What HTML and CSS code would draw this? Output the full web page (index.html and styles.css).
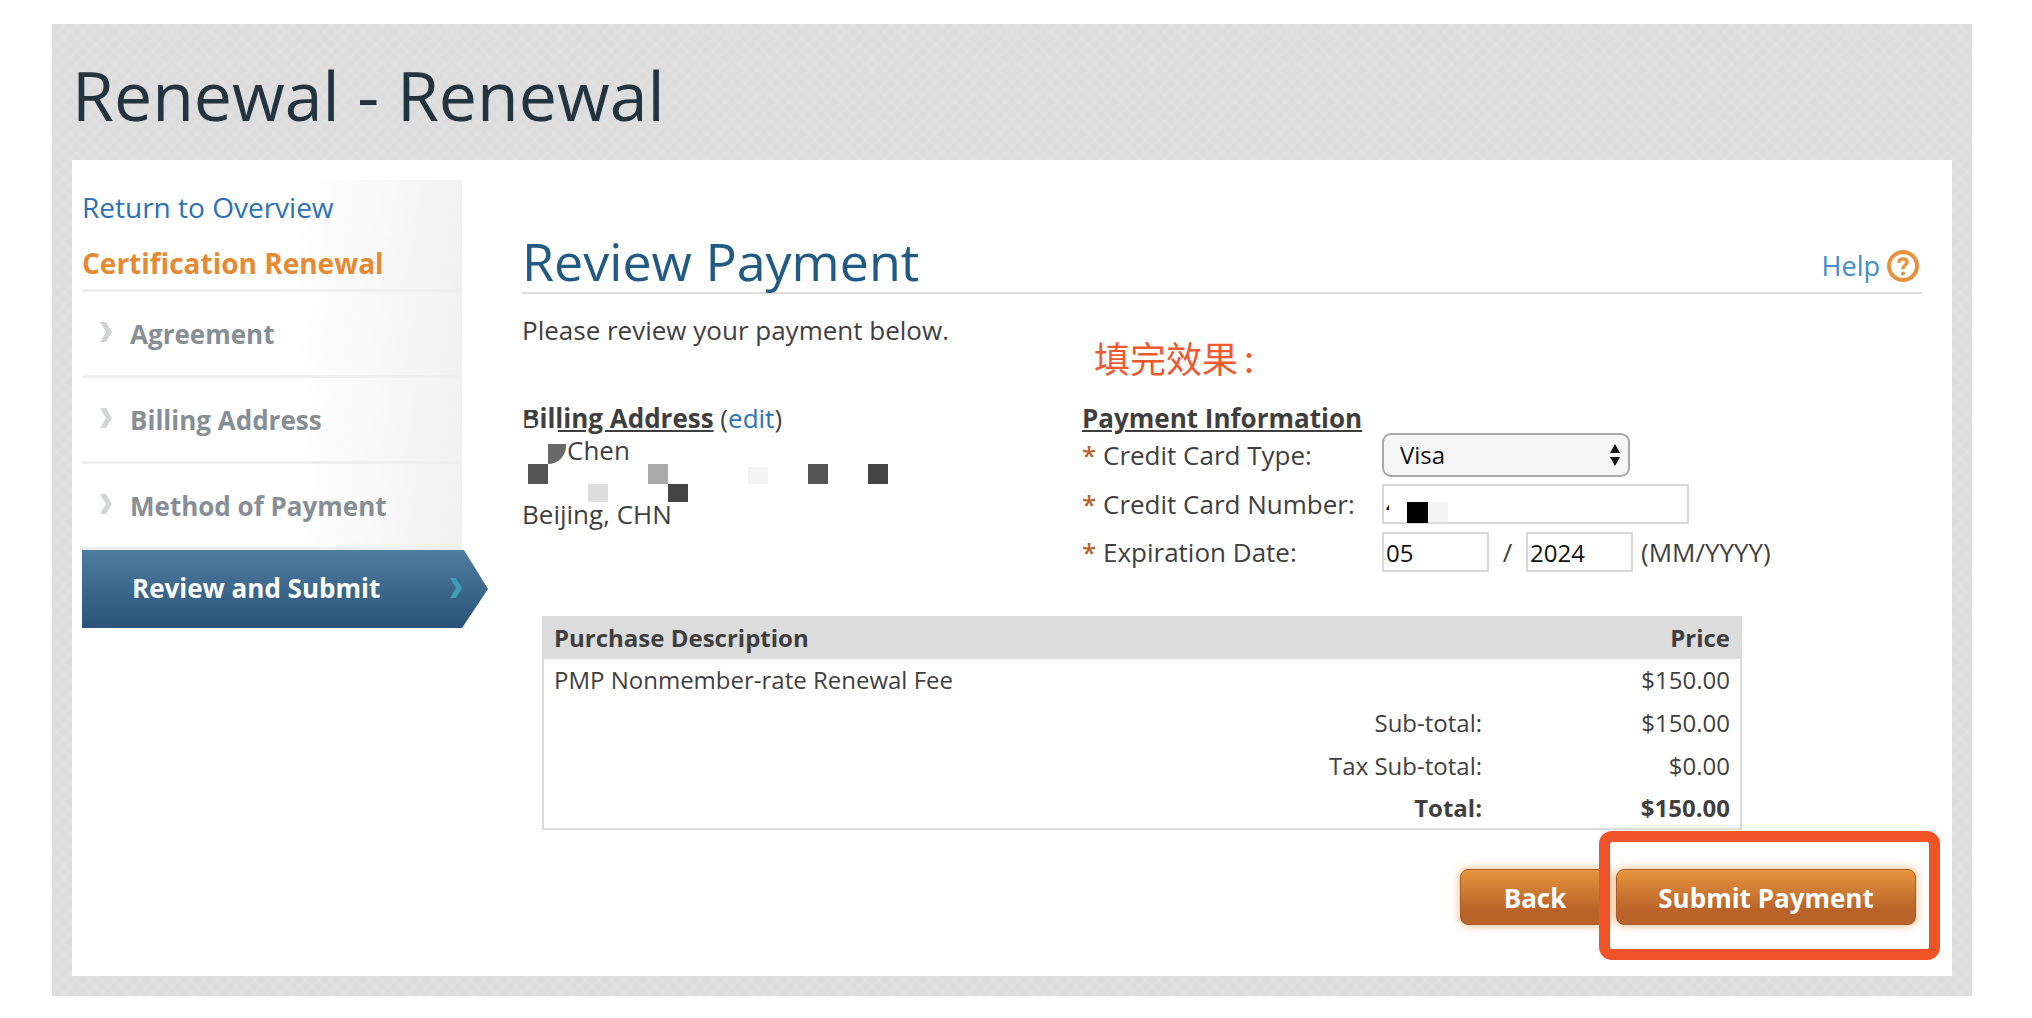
FILE: index.html
```html
<!DOCTYPE html>
<html lang="en">

<head>
    <meta charset="UTF-8">
    <title>Renewal - Renewal</title>
    <link rel="stylesheet" href="styles.css">
</head>

<body>
    <div class="page">
        <h1 class="page-title">Renewal - Renewal</h1>
        <div class="panel">
            <div class="sidebar">
                <div class="side-top">
                    <a class="overview-link" href="#">Return to Overview</a>
                    <div class="side-title">Certification Renewal</div>
                </div>
                <div class="step"><span class="step-arrow">
                    <svg width="12" height="20" viewBox="0 0 12 20"><path d="M0 0h6l6 10-6 10H0l6-10z" fill="#d2d4d6"/></svg>
                </span>Agreement</div>
                <div class="step"><span class="step-arrow">
                    <svg width="12" height="20" viewBox="0 0 12 20"><path d="M0 0h6l6 10-6 10H0l6-10z" fill="#d2d4d6"/></svg>
                </span>Billing Address</div>
                <div class="step"><span class="step-arrow">
                    <svg width="12" height="20" viewBox="0 0 12 20"><path d="M0 0h6l6 10-6 10H0l6-10z" fill="#d2d4d6"/></svg>
                </span>Method of Payment</div>
                <div class="step-active">
                    <span>Review and Submit</span>
                    <svg class="active-arrow" width="12" height="20" viewBox="0 0 12 20"><path d="M0 0h6l6 10-6 10H0l6-10z" fill="#3f9db5"/></svg>
                </div>
            </div>

            <div class="content">
                <div class="content-head">
                    <h2 class="content-title">Review Payment</h2>
                    <a class="help" href="#">Help
                        <svg width="32" height="32" viewBox="0 0 32 32"><circle cx="16" cy="16" r="14" fill="#fff" stroke="#e8903c" stroke-width="4"/><path d="M10.500 12.500c0-3.200 2.500-5 5.500-5s5.500 1.700 5.500 4.500c0 3.800-4 3.700-4 7h-3c0-4.300 4-4.500 4-6.800 0-1.200-1.100-2-2.500-2s-2.500.9-2.600 2.300z" fill="#e8903c" stroke="#e8903c" stroke-width=".6"/><circle cx="16" cy="23.500" r="2" fill="#e8903c"/></svg>
                    </a>
                </div>
                <p class="intro">Please review your payment below.</p>

                <div class="details">
                    <div class="billing">
                        <div class="sub-head"><b>Billing Address</b> (<a href="#">edit</a>)</div>
                        <div class="name-line">Chen</div>
                        <div class="street-line"></div>
                        <div>Beijing, CHN</div>
                        <i class="mask m-t"></i>
                        <i class="mask m-b"></i>
                        <i class="mask m-u"></i>
                        <i class="mask m1"></i>
                        <i class="mask m2"></i>
                        <i class="mask m3"></i>
                        <i class="mask m4"></i>
                        <i class="mask m5"></i>
                        <i class="mask m6"></i>
                        <i class="mask m7"></i>
                        <i class="mask m8"></i>
                    </div>
                    <div class="payment">
                        <div class="sub-head"><b>Payment Information</b></div>
                        <div class="field field-type">
                            <label><span class="req">*</span> Credit Card Type:</label>
                            <div class="select-wrap">
                                <select class="card-select"><option>Visa</option></select>
                                <svg class="select-arrows" width="12" height="24" viewBox="0 0 12 24"><path d="M6 1l5 9H1zM1 14h10l-5 9z" fill="#111"/></svg>
                            </div>
                        </div>
                        <div class="field">
                            <label><span class="req">*</span> Credit Card Number:</label>
                            <div class="number-wrap">
                                <input class="text-input number-input" type="text" value="4">
                                <i class="mask n0"></i>
                                <i class="mask n1"></i>
                                <i class="mask n2"></i>
                            </div>
                        </div>
                        <div class="field">
                            <label><span class="req">*</span> Expiration Date:</label>
                            <input class="text-input date-input" type="text" value="05">
                            <span class="slash">/</span>
                            <input class="text-input date-input" type="text" value="2024">
                            <span class="format">(MM/YYYY)</span>
                        </div>
                    </div>
                </div>

                <table class="purchase">
                    <tr class="head-row">
                        <th class="desc" colspan="2">Purchase Description</th>
                        <th class="price">Price</th>
                    </tr>
                    <tr>
                        <td class="desc">PMP Nonmember-rate Renewal Fee</td>
                        <td class="label"></td>
                        <td class="price">$150.00</td>
                    </tr>
                    <tr>
                        <td class="desc"></td>
                        <td class="label">Sub-total:</td>
                        <td class="price">$150.00</td>
                    </tr>
                    <tr>
                        <td class="desc"></td>
                        <td class="label">Tax Sub-total:</td>
                        <td class="price">$0.00</td>
                    </tr>
                    <tr class="total-row">
                        <td class="desc"></td>
                        <td class="label">Total:</td>
                        <td class="price">$150.00</td>
                    </tr>
                </table>

                <div class="actions">
                    <a class="btn btn-back" href="#">Back</a>
                    <a class="btn btn-submit" href="#">Submit Payment</a>
                </div>
            </div>
        </div>
        <div class="note">填完效果<span class="note-colon">:</span></div>
        <div class="red-box"></div>
    </div>
</body>

</html>
```

FILE: styles.css
```css
* {
    box-sizing: border-box;
}

body {
    margin: 0;
    background: #fff;
    font-family: "Open Sans", "Noto Sans", sans-serif;
    color: #3f3f3f;
}

a {
    text-decoration: none;
}

.page {
    position: relative;
    width: 1920px;
    height: 972px;
    margin: 24px 0 0 52px;
    padding: 0 20px;
    background-color: #dcdcdc;
    background-image:
        repeating-linear-gradient(45deg, rgba(255, 255, 255, .07) 0 3px, transparent 3px 9px),
        repeating-linear-gradient(-45deg, rgba(255, 255, 255, .07) 0 3px, transparent 3px 9px);
}

.page-title {
    height: 136px;
    margin: 0;
    padding: 26px 0 0 0;
    font-size: 68px;
    line-height: 90px;
    font-weight: 400;
    color: #24343f;
}

.panel {
    display: flex;
    height: 816px;
    padding: 20px 30px 0 10px;
    background: #fff;
}

.sidebar {
    flex: none;
    width: 380px;
    margin-right: 60px;
}

.side-top {
    height: 112px;
    padding-top: 8px;
    border-bottom: 3px solid #efefef;
    background: linear-gradient(100deg, #fff 55%, #f1f1f1);
}

.overview-link {
    display: block;
    font-size: 28px;
    line-height: 38px;
    color: #2a72b5;
}

.side-title {
    margin-top: 18px;
    font-size: 28px;
    line-height: 38px;
    font-weight: 700;
    color: #e58a33;
}

.step {
    display: flex;
    align-items: center;
    height: 86px;
    border-bottom: 3px solid #efefef;
    background: linear-gradient(100deg, #fff 55%, #f1f1f1);
    font-size: 26px;
    font-weight: 700;
    color: #868e96;
}

.step-arrow {
    display: flex;
    width: 48px;
    padding: 0 0 4px 18px;
}

.step-active {
    position: relative;
    display: flex;
    align-items: center;
    justify-content: space-between;
    width: 380px;
    height: 78px;
    padding: 0 0 2px 50px;
    background: linear-gradient(#4d7da0, #2a5377);
    font-size: 26px;
    font-weight: 700;
    color: #fff;
}

.step-active::after {
    content: "";
    position: absolute;
    left: 380px;
    top: 0;
    width: 26px;
    height: 78px;
    background: linear-gradient(#4d7da0, #2a5377);
    clip-path: polygon(0 0, 2px 0, 100% 50%, 0 100%);
}

.content {
    flex: 1;
}

.content-head {
    display: flex;
    align-items: flex-end;
    justify-content: space-between;
    height: 114px;
    border-bottom: 2px solid #dcdcdc;
}

.content-title {
    margin: 0;
    font-size: 52px;
    line-height: 62px;
    font-weight: 400;
    color: #215a85;
}

.help {
    display: flex;
    align-items: center;
    gap: 7px;
    margin: 0 3px 8px 0;
    font-size: 27px;
    color: #3f8ecb;
}

.intro {
    margin: 18px 0 0;
    font-size: 26px;
    line-height: 36px;
}

.details {
    display: flex;
    margin-top: 54px;
    font-size: 26px;
    line-height: 32px;
}

.billing {
    position: relative;
    width: 560px;
}

.sub-head {
    height: 32px;
}

.sub-head a {
    color: #2a72b5;
}

.sub-head b {
    text-decoration: underline;
}

.name-line {
    padding-left: 45px;
}

.street-line {
    height: 32px;
}

.mask {
    position: absolute;
    display: block;
}

.m-t {
    left: 0;
    top: 0;
    width: 15px;
    height: 8px;
    background: #fff;
}

.m-b {
    left: 4px;
    top: 18px;
    width: 9px;
    height: 6px;
    background: #fff;
}

.m-u {
    left: 0;
    top: 26px;
    width: 36px;
    height: 6px;
    background: #fff;
}

.m1 {
    left: 6px;
    top: 62px;
    width: 20px;
    height: 20px;
    background: #555;
}

.m2 {
    left: 26px;
    top: 42px;
    width: 18px;
    height: 20px;
    border-radius: 0 0 20px 0;
    background: #696969;
}

.m3 {
    left: 126px;
    top: 62px;
    width: 20px;
    height: 20px;
    background: #aaa;
}

.m4 {
    left: 146px;
    top: 82px;
    width: 20px;
    height: 18px;
    background: #444;
}

.m5 {
    left: 66px;
    top: 82px;
    width: 20px;
    height: 18px;
    background: #ddd;
}

.m6 {
    left: 226px;
    top: 65px;
    width: 20px;
    height: 17px;
    background: #f3f3f3;
}

.m7 {
    left: 286px;
    top: 62px;
    width: 20px;
    height: 20px;
    background: #555;
}

.m8 {
    left: 346px;
    top: 62px;
    width: 20px;
    height: 20px;
    background: #444;
}

.field {
    display: flex;
    align-items: center;
    height: 48px;
}

.field-type {
    height: 51px;
    margin-top: -5px;
}

.field label {
    width: 300px;
}

.req {
    color: #b8642a;
    font-weight: 600;
}

.select-wrap {
    position: relative;
    width: 248px;
    height: 44px;
}

.card-select {
    width: 100%;
    height: 100%;
    padding: 0 0 0 16px;
    border: 2px solid #a9a9a9;
    border-radius: 9px;
    appearance: none;
    background: #f6f6f6;
    font-family: "Open Sans", sans-serif;
    font-size: 24px;
    color: #111;
}

.select-arrows {
    position: absolute;
    right: 9px;
    top: 10px;
}

.text-input {
    height: 40px;
    padding: 0 2px;
    border: 2px solid #d8d8d8;
    font-family: "Open Sans", sans-serif;
    font-size: 24px;
    color: #111;
}

.number-wrap {
    position: relative;
    width: 307px;
    height: 40px;
}

.number-input {
    width: 100%;
}

.n0 {
    left: 7px;
    top: 2px;
    width: 18px;
    height: 36px;
    background: #fff;
}

.n1 {
    left: 25px;
    top: 18px;
    width: 21px;
    height: 21px;
    background: #000;
}

.n2 {
    left: 46px;
    top: 18px;
    width: 20px;
    height: 20px;
    background: #f3f3f3;
}

.date-input {
    width: 107px;
}

.slash {
    width: 37px;
    text-align: center;
}

.format {
    margin-left: 8px;
}

.purchase {
    width: 1200px;
    height: 214px;
    margin: 40px 0 0 20px;
    border: 2px solid #dcdcdc;
    border-top: 0;
    border-collapse: collapse;
    table-layout: fixed;
    font-size: 24px;
}

.purchase th,
.purchase td {
    height: 42px;
    padding: 0 10px;
}

.head-row {
    background: #dcdcdc;
}

.desc {
    text-align: left;
}

.purchase .label {
    width: 300px;
    text-align: right;
    padding-right: 0;
}

.purchase .price {
    width: 259px;
    text-align: right;
}

.total-row {
    font-weight: 700;
}

.actions {
    display: flex;
    justify-content: flex-end;
    gap: 6px;
    margin: 39px 6px 0 0;
}

.btn {
    display: flex;
    align-items: center;
    justify-content: center;
    height: 56px;
    padding-top: 1px;
    border: 1px solid #a85c22;
    border-radius: 8px;
    background: linear-gradient(#e6953f, #b9632a 75%);
    box-shadow: 0 0 10px rgba(232, 140, 60, .7);
    font-size: 26px;
    font-weight: 700;
    color: #fff;
}

.btn-back {
    width: 150px;
}

.btn-submit {
    width: 300px;
}

.note {
    position: absolute;
    left: 1042px;
    top: 309px;
    font-family: "Noto Sans CJK SC", sans-serif;
    font-size: 36px;
    line-height: 48px;
    color: #ee5a30;
}

.note-colon {
    margin-left: 6px;
}

.red-box {
    position: absolute;
    left: 1547px;
    top: 807px;
    width: 341px;
    height: 129px;
    border: 11px solid #f05327;
    border-radius: 13px;
}
```
